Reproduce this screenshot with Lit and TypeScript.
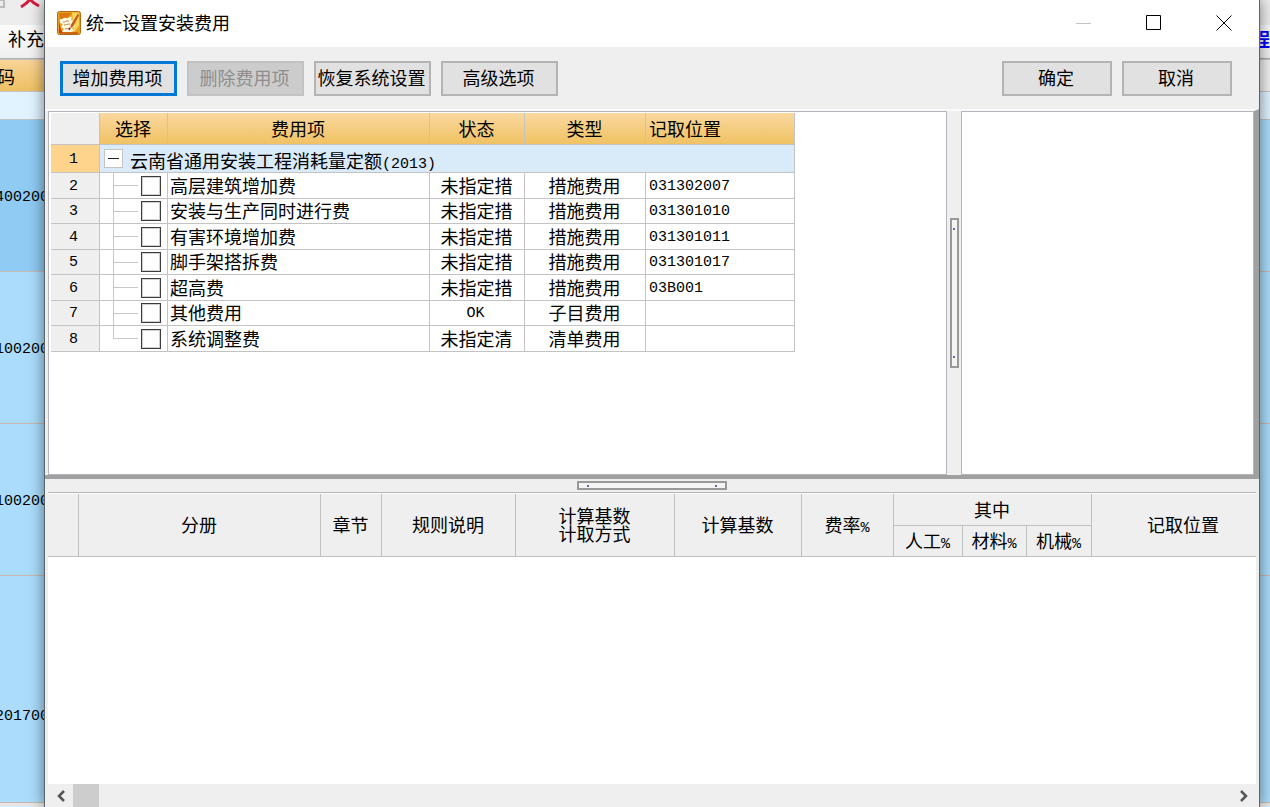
import { LitElement, html, css, svg } from "lit";
import { customElement, property, state } from "lit/decorators.js";

interface Fee {
  name: string;
  status: string;
  kind: string;
  code: string;
}

const FEES: Fee[] = [
  { name: "高层建筑增加费", status: "未指定措", kind: "措施费用", code: "031302007" },
  { name: "安装与生产同时进行费", status: "未指定措", kind: "措施费用", code: "031301010" },
  { name: "有害环境增加费", status: "未指定措", kind: "措施费用", code: "031301011" },
  { name: "脚手架搭拆费", status: "未指定措", kind: "措施费用", code: "031301017" },
  { name: "超高费", status: "未指定措", kind: "措施费用", code: "03B001" },
  { name: "其他费用", status: "OK", kind: "子目费用", code: "" },
  { name: "系统调整费", status: "未指定清", kind: "清单费用", code: "" },
];

const logo = svg`
  <rect x="0.5" y="0.5" width="23" height="23" rx="2" fill="#e9a01f" stroke="#b86a10"/>
  <path d="M2 2h13l-4 4-8 3z" fill="#d9780f"/>
  <path d="M15 1.500h7v13l-5 7z" fill="#ffd45a"/>
  <path d="M2 10l2 9 3 3H2z" fill="#c23f12"/>
  <path d="M3 8c3 1 3-2 6-1s3-2 6-1l-1 3 3 1-1 3 2 2-3 2 2 3c-3 1-4 2-6 1s-4 2-6 0l2-3-3-2 2-3-3-1z" fill="#fffbe6"/>
  <path d="M6 11c2 1 3-2 6-1M7 14c2 0 3-1 6-1M8 18c2 0 3-1 5-1" fill="none" stroke="#c98238" stroke-width="1"/>
  <path d="M21 2.500l-7 11-1 4 3-2 6-11z" fill="#c8581a"/>
  <path d="M13 17l-1 2" stroke="#5a2408" stroke-width="1.200"/>
  <path d="M3 22h18" stroke="#c4500f" stroke-width="1.500"/>`;

@customElement("fee-grid")
export class FeeGrid extends LitElement {
  @property({ attribute: false }) fees: Fee[] = [];
  @state() private open = true;

  static styles = css`
    :host { display: block; }
    table { border-collapse: separate; border-spacing: 0; table-layout: fixed; width: 744px; }
    .c-num { width: 49px; }
    .c-pick { width: 68px; }
    .c-name { width: 262px; }
    .c-status { width: 95px; }
    .c-kind { width: 121px; }
    .c-code { width: 149px; }
    th, td {
      box-sizing: border-box;
      padding: 0 1px 2px 0;
      border: solid #c3c3c3;
      border-width: 0 1px 1px 0;
      font-weight: 400;
      line-height: 18px;
      white-space: nowrap;
      overflow: hidden;
      text-align: center;
    }
    thead th { height: 32px; background: linear-gradient(#fad8a0, #f0c263); }
    thead .corner, tbody th { background: #efefef; }
    .left { text-align: left; padding-left: 3px; }
    td.left { padding-left: 2px; }
    td.left.num { padding-left: 3px; }
    tbody th, .num { font-family: "Liberation Mono", monospace; font-size: 15px; }
    tbody th, td.num { padding: 2px 3px 0 0; }
    tbody tr { height: 25px; }
    tbody tr:nth-child(even) { height: 26px; }
    tbody .group { height: 28px; }
    .group th { background: #fed38c; }
    .group td { background: #d9eaf8; padding: 0; }
    .title { display: flex; align-items: center; gap: 7px; padding-left: 4px; }
    .title > span { padding-top: 2px; }
    .title .num { line-height: 1px; }
    .fold {
      width: 19px; height: 19px; padding: 0; display: grid; place-items: center;
      background: #fff; border: 1px solid #c3c3c3;
    }
    .fold i { width: 11px; height: 1px; background: #222; }
    .branch {
      text-align: left; padding: 0;
      background:
        linear-gradient(#c8c8c8, #c8c8c8) 13px 0 / 1px 100% no-repeat,
        linear-gradient(#c8c8c8, #c8c8c8) 13px 50% / 25px 1px no-repeat;
    }
    tr:last-child .branch { background-size: 1px 50%, 25px 1px; }
    .branch input {
      appearance: none; display: block; box-sizing: border-box;
      width: 20px; height: 20px; margin: 0 0 0 41px;
      border: 1px solid #3c3c3c; background: #fff;
      outline: 1px solid #cfcfcf; outline-offset: -2px;
    }
    .branch input:checked { background: #3c3c3c; box-shadow: inset 0 0 0 4px #fff; }
  `;

  render() {
    return html`<table>
      <colgroup>
        <col class="c-num"><col class="c-pick"><col class="c-name">
        <col class="c-status"><col class="c-kind"><col class="c-code">
      </colgroup>
      <thead><tr>
        <th class="corner"></th><th>选择</th><th>费用项</th><th>状态</th><th>类型</th><th class="left">记取位置</th>
      </tr></thead>
      <tbody>
        <tr class="group">
          <th>1</th>
          <td colspan="5"><div class="title">
            <button class="fold" aria-label="折叠" @click=${() => (this.open = !this.open)}><i></i></button>
            <span>云南省通用安装工程消耗量定额<span class="num">(2013)</span></span>
          </div></td>
        </tr>
        ${this.open ? this.fees.map((f, i) => html`<tr>
          <th>${i + 2}</th>
          <td class="branch"><input type="checkbox" id="fee${i}"></td>
          <td class="left"><label for="fee${i}">${f.name}</label></td>
          <td class=${f.status === "OK" ? "num" : ""}>${f.status}</td>
          <td>${f.kind}</td>
          <td class="left num">${f.code}</td>
        </tr>`) : ""}
      </tbody>
    </table>`;
  }
}

@customElement("rate-grid")
export class RateGrid extends LitElement {
  static styles = css`
    :host { display: flex; flex-direction: column; overflow: hidden; min-height: 0; }
    .sheet { flex: 1; min-height: 0; overflow: hidden; background: #fff; padding-top: 1px; }
    table { border-collapse: separate; border-spacing: 0; table-layout: fixed; width: 1228px; }
    .w1 { width: 31px; } .w2 { width: 242px; } .w3 { width: 61px; } .w4 { width: 134px; }
    .w5 { width: 159px; } .w6 { width: 127px; } .w7 { width: 92px; } .w8 { width: 69px; }
    .w9 { width: 64px; } .w10 { width: 65px; } .w11 { width: 184px; }
    tr { height: 32px; }
    tr:last-child { height: 31px; }
    th {
      box-sizing: border-box; padding: 0 1px 2px 0; background: #efefef; font-weight: 400;
      line-height: 18px; white-space: nowrap;
      border: solid #c0c0c0; border-width: 0 1px 1px 0;
    }
    .num { font-family: "Liberation Mono", monospace; font-size: 15px; line-height: 1px; }
    .bar { display: flex; height: 23px; background: #efefef; }
    .bar button {
      width: 25px; padding: 0; border: 0; background: none; display: grid; place-items: center;
    }
    .track { flex: 1; }
    .thumb { width: 26px; height: 100%; background: #cdcdcd; }
    path { fill: none; stroke: #555; stroke-width: 2.5; }
  `;

  render() {
    const pct = html`<span class="num">%</span>`;
    return html`
      <div class="sheet"><table>
        <colgroup>${[1, 2, 3, 4, 5, 6, 7, 8, 9, 10, 11].map((n) => html`<col class="w${n}">`)}</colgroup>
        <thead>
          <tr>
            <th rowspan="2"></th><th rowspan="2">分册</th><th rowspan="2">章节</th>
            <th rowspan="2">规则说明</th><th rowspan="2">计算基数<br>计取方式</th>
            <th rowspan="2">计算基数</th><th rowspan="2">费率${pct}</th>
            <th colspan="3">其中</th><th rowspan="2">记取位置</th>
          </tr>
          <tr><th>人工${pct}</th><th>材料${pct}</th><th>机械${pct}</th></tr>
        </thead>
      </table></div>
      <div class="bar">
        <button aria-label="向左"><svg width="12" height="12"><path d="M9 1L4 6l5 5"/></svg></button>
        <div class="track"><div class="thumb"></div></div>
        <button aria-label="向右"><svg width="12" height="12"><path d="M3 1l5 5-5 5"/></svg></button>
      </div>`;
  }
}

@customElement("app-root")
export class AppRoot extends LitElement {
  static styles = css`
    :host {
      display: grid; grid-template-columns: 44px minmax(0, 1fr) 10px;
      height: 100vh; overflow: hidden; color: #000;
      font: 18px/18px "Noto Sans CJK SC", sans-serif;
    }
    .behind { display: flex; flex-direction: column; overflow: hidden; min-height: 0; }
    .behind > div {
      box-sizing: border-box; flex: none; display: flex; align-items: center;
      justify-content: center; overflow: hidden; white-space: nowrap;
    }
    .behind .icons { height: 25px; background: #ededed; }
    .left .icons { align-items: flex-start; justify-content: flex-start; }
    .behind .menu {
      height: 34px; padding-bottom: 8px; background: linear-gradient(#fbfbfb, #f0f0f0);
      border-bottom: 1px solid #b0b0b0;
    }
    .left .menu { justify-content: flex-start; padding-left: 8px; }
    .right .menu { justify-content: flex-end; color: #00f; font-weight: 700; }
    .head { height: 33px; background: linear-gradient(#f8d496, #efc063); border: solid #c4c4c4; border-width: 1px 0; }
    .right .head { background: #efefef; }
    .left .head { justify-content: flex-start; }
    .head span { margin-left: -3px; }
    .pale { height: 28px; background: #e0f3ff; border-bottom: 1px solid #bcc4c8; }
    .behind .code {
      height: 152px; padding-top: 4px; background: #abdcfb; border-bottom: 1px solid #c8b8b0;
      font: 15px/18px "Liberation Mono", monospace;
    }
    .left .code.on { background: #8fcbf3; }
    .behind .code.rest { flex: 1; padding-top: 56px; }
    .foot { height: 4px; background: #e6e6e6; }
    .dialog {
      position: relative; display: flex; flex-direction: column; min-height: 0;
      background: #efefef; border: solid #5c6468; border-width: 0 1px;
      box-shadow: 0 0 14px rgba(0, 0, 0, 0.5);
    }
    .caption {
      box-sizing: border-box; height: 47px; flex: none; display: flex; align-items: center;
      background: #fff; padding: 0 0 2px 12px;
    }
    h1 { flex: 1; margin: 0 0 0 5px; padding-bottom: 2px; font-size: 18px; line-height: 24px; font-weight: 400; }
    .caption button { width: 70px; height: 44px; padding: 0; border: 0; background: none; display: grid; place-items: center; }
    .caption button path { fill: none; stroke: #000; }
    .caption .off path { stroke: #c4c4c4; }
    .tools { height: 62px; flex: none; display: flex; align-items: center; gap: 10px; padding: 0 27px 0 15px; box-sizing: border-box; }
    .tools button {
      box-sizing: border-box; width: 117px; height: 35px; padding: 0 2px 2px 0; white-space: nowrap;
      font: inherit; color: #000; background: #e1e1e1; border: 2px solid #b4b4b4;
    }
    .tools .main { border: 3px solid #0078d7; }
    .tools button:disabled { color: #8e8e8e; background: #cccccc; border-color: #c2c2c2; }
    .tools .short { width: 110px; }
    .gap { flex: 1; }
    .upper {
      flex: 364; min-height: 0; display: grid; grid-template-columns: minmax(0, 899fr) 14px minmax(0, 293fr);
      padding-left: 3px; border: solid #a0a0a0; border-width: 0 5px 4px 0;
      border-top: 2px solid #fafafa;
    }
    .pane { overflow: hidden; background: #fff; border: 1px solid #b4b4bc; padding: 1px 0 0 2px; }
    .grip { display: grid; place-items: center; }
    .grip div { display: flex; justify-content: space-between; box-sizing: border-box; border: 2px solid #999; background: #f4f4f4; }
    .grip i { width: 2px; height: 2px; background: #6666b0; }
    .grip.v div { flex-direction: column; align-items: center; width: 9px; height: 150px; padding: 8px 0; }
    .grip.h { flex: none; height: 13px; }
    .grip.h div { width: 150px; height: 9px; align-items: center; padding: 0 8px; }
    rate-grid { flex: 314; margin: 0 3px; border-top: 1px solid #b4b4bc; }
  `;

  render() {
    return html`
      <div class="behind left">
        <div class="icons"><svg width="44" height="10">
          <path d="M0 0h4v7H0" fill="none" stroke="#bbb" stroke-width="2"/>
          <path d="M21 7C26 4 29 1 31 -2M39 6C35 4 31 1 29 -2" fill="none" stroke="#d8183c" stroke-width="3"/>
        </svg></div>
        <div class="menu">补充</div>
        <div class="head"><span>码</span></div>
        <div class="pale"></div>
        <div class="code on">400200</div>
        <div class="code">100200</div>
        <div class="code">100200</div>
        <div class="code rest">201700</div>
        <div class="foot"></div>
      </div>
      <div class="dialog" role="dialog" aria-labelledby="title">
        <div class="caption">
          <svg width="24" height="24">${logo}</svg>
          <h1 id="title">统一设置安装费用</h1>
          <button class="off" aria-label="最小化" disabled><svg width="16" height="16"><path d="M0 8.500h15"/></svg></button>
          <button aria-label="最大化"><svg width="16" height="16"><path d="M.5.5h14v14H.5z"/></svg></button>
          <button aria-label="关闭"><svg width="16" height="16"><path d="M.5.5l15 15M15.500.5l-15 15"/></svg></button>
        </div>
        <div class="tools">
          <button class="main">增加费用项</button>
          <button disabled>删除费用项</button>
          <button>恢复系统设置</button>
          <button>高级选项</button>
          <div class="gap"></div>
          <button class="short">确定</button>
          <button class="short">取消</button>
        </div>
        <div class="upper">
          <div class="pane"><fee-grid .fees=${FEES}></fee-grid></div>
          <div class="grip v"><div><i></i><i></i></div></div>
          <div class="pane"></div>
        </div>
        <div class="grip h"><div><i></i><i></i></div></div>
        <rate-grid></rate-grid>
      </div>
      <div class="behind right">
        <div class="icons"></div>
        <div class="menu">程</div>
        <div class="head"></div>
        <div class="pale"></div>
        <div class="code"></div>
        <div class="code"></div>
        <div class="code"></div>
        <div class="code rest"></div>
        <div class="foot"></div>
      </div>`;
  }
}
